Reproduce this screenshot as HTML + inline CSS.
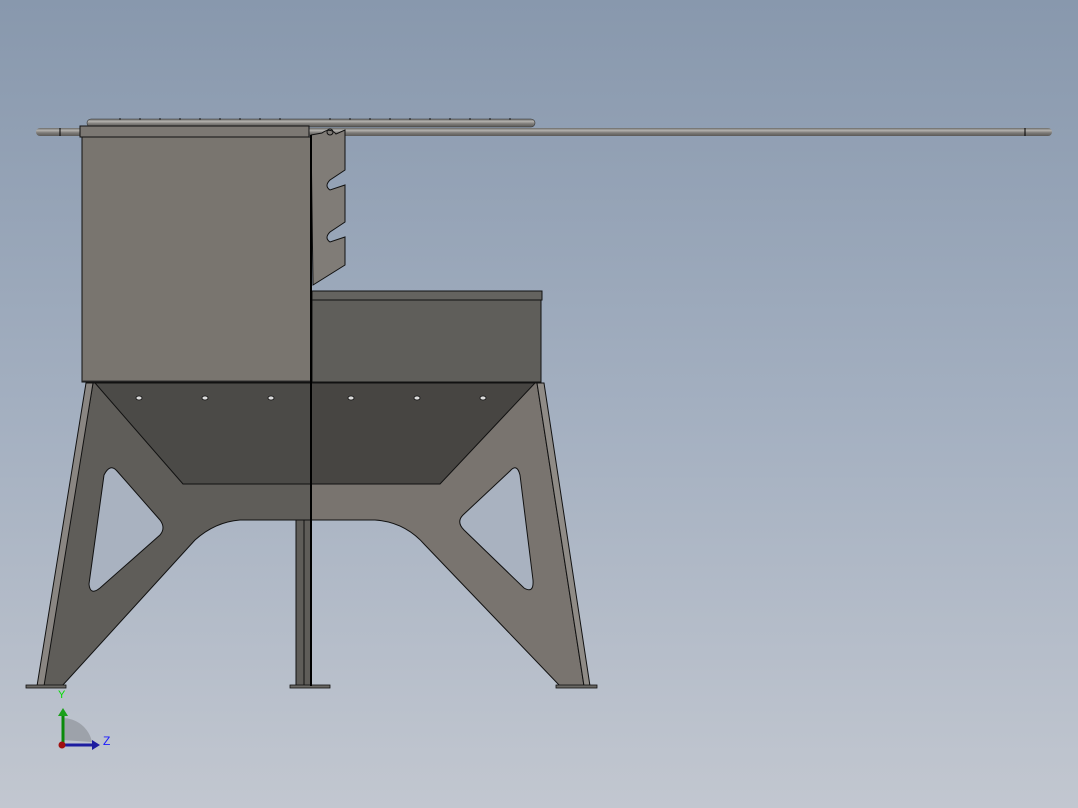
<!DOCTYPE html>
<html><head><meta charset="utf-8"><style>
html,body{margin:0;padding:0;width:1078px;height:808px;overflow:hidden}
svg{display:block}
</style></head><body>
<svg width="1078" height="808" viewBox="0 0 1078 808" xmlns="http://www.w3.org/2000/svg">
<defs>
<linearGradient id="bg" x1="0" y1="0" x2="0" y2="1">
<stop offset="0" stop-color="#8898ad"/><stop offset="0.5" stop-color="#a3afc0"/><stop offset="1" stop-color="#c2c7d0"/>
</linearGradient>
<linearGradient id="rod" x1="0" y1="0" x2="0" y2="1">
<stop offset="0" stop-color="#6a6a68"/><stop offset="0.3" stop-color="#b4b2ae"/><stop offset="0.6" stop-color="#7d7b78"/><stop offset="1" stop-color="#5a5957"/>
</linearGradient>
</defs>
<rect width="1078" height="808" fill="url(#bg)"/>

<rect x="36" y="128" width="1016" height="8" rx="4" fill="url(#rod)"/>
<line x1="1025" y1="128" x2="1025" y2="136" stroke="#000"/>
<line x1="60" y1="128" x2="60" y2="136" stroke="#000"/>
<rect x="87" y="119" width="448" height="8" rx="4" fill="url(#rod)" stroke="#333" stroke-width="0.6"/>
<g fill="#222">
<circle cx="120" cy="119" r="0.9"/><circle cx="140" cy="119" r="0.9"/><circle cx="160" cy="119" r="0.9"/><circle cx="180" cy="119" r="0.9"/><circle cx="200" cy="119" r="0.9"/><circle cx="220" cy="119" r="0.9"/><circle cx="240" cy="119" r="0.9"/><circle cx="260" cy="119" r="0.9"/><circle cx="280" cy="119" r="0.9"/><circle cx="330" cy="119" r="0.9"/><circle cx="350" cy="119" r="0.9"/><circle cx="370" cy="119" r="0.9"/><circle cx="390" cy="119" r="0.9"/><circle cx="410" cy="119" r="0.9"/><circle cx="430" cy="119" r="0.9"/><circle cx="450" cy="119" r="0.9"/><circle cx="470" cy="119" r="0.9"/><circle cx="490" cy="119" r="0.9"/><circle cx="510" cy="119" r="0.9"/>
</g>

<path d="M93,383 L311,383 L311,520 L240,520 Q215,522 195,540 L62,686 L42,686 Z" fill="#5f5d59" stroke="#111" stroke-width="1"/>
<path d="M311,383 L537,383 L584,686 L560,686 L425,545 Q405,522 375,520 L311,520 Z" fill="#79746f" stroke="#111" stroke-width="1"/>
<path d="M86,383 L93,383 L44,686 L37,686 Z" fill="#8a8682" stroke="#111" stroke-width="1"/>
<path d="M537,383 L544,383 L590,686 L584,686 Z" fill="#8f8b86" stroke="#111" stroke-width="1"/>
<path d="M104,475 Q110,463 117,471 L160,520 Q166,528 160,535 L100,588 Q90,596 89,584 Z" fill="#a9b2c0" stroke="#111" stroke-width="1"/>
<path d="M510,471 Q517,463 520,475 L533,580 Q534,594 524,588 L464,530 Q456,522 463,515 Z" fill="#a9b2c0" stroke="#111" stroke-width="1"/>
<path d="M95,383 L311,383 L311,484 L183,484 Z" fill="#4b4a47" stroke="#111" stroke-width="1"/>
<path d="M311,383 L535,383 L440,484 L311,484 Z" fill="#474542" stroke="#111" stroke-width="1"/>
<g fill="#ddd" stroke="#111" stroke-width="0.8">
<ellipse cx="139" cy="398" rx="3" ry="2"/><ellipse cx="205" cy="398" rx="3" ry="2"/><ellipse cx="271" cy="398" rx="3" ry="2"/><ellipse cx="351" cy="398" rx="3" ry="2"/><ellipse cx="417" cy="398" rx="3" ry="2"/><ellipse cx="483" cy="398" rx="3" ry="2"/>
</g>
<rect x="296" y="520" width="15" height="166" fill="#5f5d59" stroke="#111" stroke-width="1"/>
<line x1="304" y1="520" x2="304" y2="686" stroke="#111"/>
<rect x="26" y="685" width="40" height="3" fill="#6a6864" stroke="#111" stroke-width="0.8"/>
<rect x="290" y="685" width="40" height="3" fill="#6a6864" stroke="#111" stroke-width="0.8"/>
<rect x="556" y="685" width="41" height="3" fill="#6a6864" stroke="#111" stroke-width="0.8"/>

<rect x="82" y="137" width="229" height="245" fill="#79756f" stroke="#111" stroke-width="1"/>
<rect x="80" y="126" width="229" height="11" fill="#7c7873" stroke="#111" stroke-width="1"/>
<line x1="82" y1="381" x2="311" y2="381" stroke="#333"/>
<path d="M311,135 L322,133 Q330,127 336,134 L345,130 L345,170 L330,180 Q324,186 330,190 L345,185 L345,222 L330,232 Q324,238 330,242 L345,237 L345,265 L313,285 Z" fill="#807c77" stroke="#111" stroke-width="1"/>
<circle cx="330" cy="132" r="3" fill="none" stroke="#111"/>
<rect x="312" y="300" width="229" height="82" fill="#5f5e5a" stroke="#111" stroke-width="1"/>
<rect x="312" y="291" width="230" height="9" fill="#64635f" stroke="#111" stroke-width="1"/>
<line x1="311" y1="135" x2="311" y2="686" stroke="#000" stroke-width="2"/>

<path d="M62,740 L62,718 A30,30 0 0 1 92,742 Z" fill="#9da2aa"/>
<line x1="63" y1="744" x2="63" y2="714" stroke="#0a8a0a" stroke-width="3"/>
<path d="M58,716 L63,708 L68,716 Z" fill="#1aa01a"/>
<line x1="62" y1="745" x2="93" y2="745" stroke="#1c1ca0" stroke-width="3"/>
<path d="M92,740 L100,745 L92,750 Z" fill="#1c1ca0"/>
<circle cx="62" cy="745" r="3.5" fill="#a01010"/>
<text x="58" y="698" font-family="Liberation Sans, sans-serif" font-size="11" fill="#00dd00">Y</text>
<text x="103" y="745" font-family="Liberation Sans, sans-serif" font-size="12" fill="#1a1aff">Z</text>
</svg>
</body></html>
